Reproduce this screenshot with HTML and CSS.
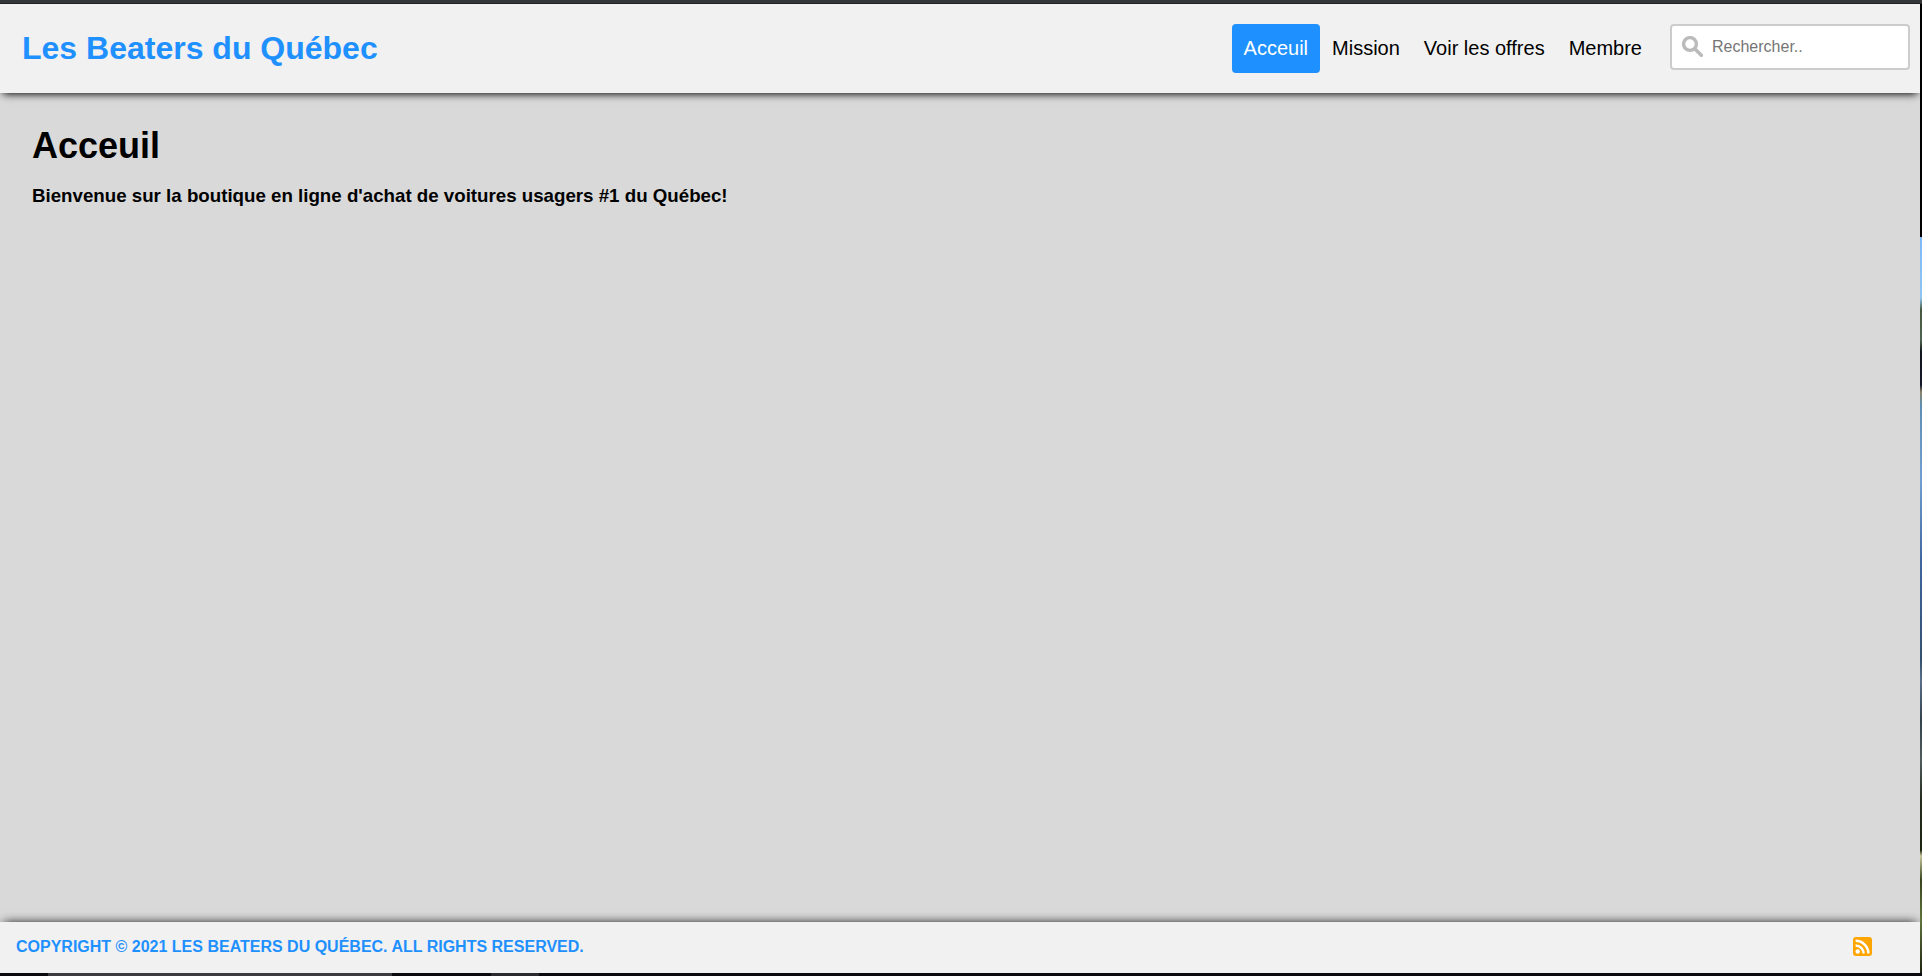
FILE: index.html
```html
<!DOCTYPE html>
<html lang="fr">
<head>
<meta charset="utf-8">
<meta name="viewport" content="width=device-width, initial-scale=1">
<title>Les Beaters du Québec</title>
<link rel="stylesheet" href="styles.css">
</head>
<body>
<div class="desktop">
  <div class="window">
    <header class="header">
      <a class="logo" href="#">Les Beaters du Québec</a>
      <nav class="nav">
        <a class="nav-link active" href="#" aria-current="page">Acceuil</a>
        <a class="nav-link" href="#">Mission</a>
        <a class="nav-link" href="#">Voir les offres</a>
        <a class="nav-link" href="#">Membre</a>
      </nav>
      <form class="search">
        <svg class="search-icon" viewBox="0 0 22 22" aria-hidden="true"><circle cx="8" cy="8" r="6.4" fill="none" stroke="#bbb" stroke-width="3.4"/><path d="M13 13 19.3 19.3" stroke="#bbb" stroke-width="3.6" stroke-linecap="round"/></svg>
        <input class="search-input" type="text" name="q" placeholder="Rechercher.." aria-label="Rechercher">
      </form>
    </header>
    <main class="content">
      <h1 class="title">Acceuil</h1>
      <h3 class="welcome">Bienvenue sur la boutique en ligne d'achat de voitures usagers #1 du Québec!</h3>
    </main>
    <footer class="footer">
      <p class="copyright">Copyright © 2021 Les Beaters du Québec. All rights reserved.</p>
      <a class="rss" href="#" aria-label="Flux RSS"><svg class="rss-icon" viewBox="0 0 19 19" aria-hidden="true"><rect width="19" height="19" rx="3" fill="#ffa500"/><circle cx="4.7" cy="14.5" r="2.2" fill="#fff"/><path d="M2.6 8.6A8 8 0 0 1 10.6 16.6M2.6 3.8A12.8 12.8 0 0 1 15.4 16.6" fill="none" stroke="#fff" stroke-width="2.5"/></svg></a>
    </footer>
  </div>
</div>
</body>
</html>
```
FILE: styles.css
```css
* { box-sizing: border-box; }

body {
  margin: 0;
  font-family: Arial, "Liberation Sans", sans-serif;
  color: #000;
}

.desktop {
  min-height: 100vh;
  display: flex;
  padding: 4px 2px 3px 0;
  background:
    linear-gradient(#35363a 0 3px, #202124 3px 4px) top / 100% 4px no-repeat,
    linear-gradient(90deg, #0b0a0e 0 48px, #3c3c3e 48px 392px, #0b0a0e 392px 491px, #2b2a2f 491px 539px, #0b0a0e 539px) bottom / 100% 3px no-repeat,
    linear-gradient(#000 0 237px, #7fb8f8 237px, #8fc4f0 298px, #46583c 310px, #4e6450 340px, #10141c 352px, #15182a 385px, #8a8268 392px, #5f8eb4 405px, #6f9fd0 480px, #3f679f 560px, #33506f 660px, #5a6f8c 680px, #32434c 720px, #4f5c5c 760px, #232b1c 800px, #1c2410 850px, #c6c79a 856px, #39451f 880px, #60743a 920px, #1a2010) right / 2px 100% no-repeat;
}

.window {
  flex: 1;
  display: flex;
  flex-direction: column;
  overflow: hidden;
  background: #d9d9d9;
}

.header {
  display: flex;
  align-items: flex-start;
  padding: 20px 10px;
  background: #f1f1f1;
  box-shadow: 0 4px 8px -3px #000;
}

.logo {
  margin-right: auto;
  padding: 12px;
  font-size: 32px;
  font-weight: bold;
  line-height: 25px;
  color: #1e90ff;
  text-decoration: none;
}

.nav { display: flex; }

.nav-link {
  padding: 12px;
  border-radius: 4px;
  font-size: 20px;
  line-height: 25px;
  color: #000;
  text-decoration: none;
}

.nav-link.active {
  background: #1e90ff;
  color: #fff;
}

.search {
  position: relative;
  width: 240px;
  margin-left: 16px;
}

.search-icon {
  position: absolute;
  top: 12px;
  left: 12px;
  width: 22px;
  height: 22px;
}

.search-input {
  display: block;
  width: 100%;
  height: 46px;
  padding: 12px 20px 12px 40px;
  border: 2px solid #ccc;
  border-radius: 4px;
  background: #fff;
  font-family: inherit;
  font-size: 16px;
}

.content {
  flex: 1;
  padding: 32px;
}

.title {
  margin: 0;
  font-size: 36px;
  line-height: 42px;
}

.welcome {
  margin: 19px 0 0;
  line-height: 20px;
}

.footer {
  display: flex;
  align-items: center;
  justify-content: space-between;
  padding: 15px 48px 17px 16px;
  background: #f1f1f1;
  box-shadow: 0 -3px 10px -4px #000;
}

.copyright {
  margin: 0;
  font-size: 16px;
  font-weight: bold;
  line-height: 19px;
  color: #1e90ff;
  text-transform: uppercase;
}

.rss-icon {
  display: block;
  width: 19px;
  height: 19px;
}
```
